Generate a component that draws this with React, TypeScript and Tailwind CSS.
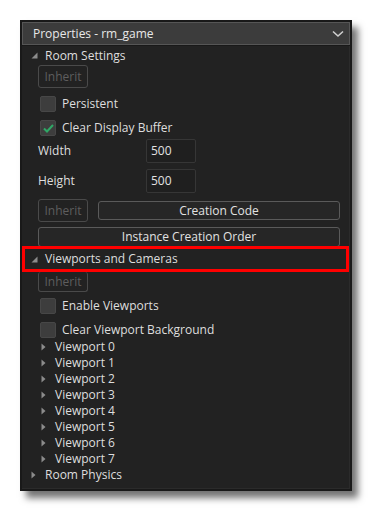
import React from "react"

const font = { fontFamily: '"Open Sans", "Noto Sans", sans-serif' }

function Expanded() {
  return (
    <svg width="7" height="7" viewBox="0 0 7 7" className="shrink-0">
      <polygon points="6.5,0.5 6.5,6.5 0.5,6.5" fill="#8c8c8c" />
    </svg>
  )
}

function Collapsed() {
  return (
    <svg width="5" height="8" viewBox="0 0 5 8" className="shrink-0">
      <polygon points="0.5,0.5 4.5,4 0.5,7.5" fill="#8c8c8c" />
    </svg>
  )
}

function Section({ label }: { label: string }) {
  return (
    <div className="flex h-[18px] items-center pl-[9px]">
      <Expanded />
      <span className="ml-[7px] pt-px text-[12px] text-[#dedede]">{label}</span>
    </div>
  )
}

function Inherit({ className = "" }: { className?: string }) {
  return (
    <div
      className={`ml-4 flex w-[50px] items-center justify-center rounded-[3px] border border-[#4a4a4a] text-[12px] text-[#5e5e5e] ${className}`}
    >
      Inherit
    </div>
  )
}

function Check({ label, checked = false, className = "" }: { label: string; checked?: boolean; className?: string }) {
  return (
    <div className={`flex h-4 items-center pl-[18px] ${className}`}>
      <div className="flex h-[16px] w-[16px] items-center justify-center rounded-[2px] border border-[#474747] bg-[#3d3d3d]">
        {checked && (
          <svg width="11" height="9" viewBox="0 0 11 9">
            <path d="M1 4.5 L4 7.5 L10 1" fill="none" stroke="#2fa866" strokeWidth="2" />
          </svg>
        )}
      </div>
      <span className="ml-[6px] text-[12px] text-[#dedede]">{label}</span>
    </div>
  )
}

function Field({ label, value, className = "" }: { label: string; value: string; className?: string }) {
  return (
    <div className={`flex h-6 items-center pl-4 ${className}`}>
      <span className="w-[108px] text-[12px] text-[#dedede]">{label}</span>
      <div className="flex h-6 w-[50px] items-center rounded-[2px] border border-[#363636] bg-[#1f1f1f] pl-[4px] text-[12px] text-[#e2e2e2]">
        {value}
      </div>
    </div>
  )
}

function Viewport({ n }: { n: number }) {
  return (
    <div className="flex h-4 items-center pl-[19px]">
      <Collapsed />
      <span className="ml-[9px] text-[12px] text-[#dedede]">Viewport {n}</span>
    </div>
  )
}

export default function App() {
  const viewports = [0, 1, 2, 3, 4, 5, 6, 7]
  return (
    <div className="h-[511px] w-[372px] bg-white pl-5 pt-5" style={font}>
      <div className="flex h-[471px] w-[332px] flex-col bg-[#191919] p-[2px] shadow-[6px_7px_7px_rgba(0,0,0,0.55)]">
        <div className="flex h-[23px] shrink-0 items-center justify-between border border-[#565656] bg-[#3c3c3c] pl-[10px] pr-[5px]">
          <span className="text-[12px] text-[#e8e8e8]">Properties - rm_game</span>
          <svg width="12" height="8" viewBox="0 0 12 8">
            <path d="M1 1.5 L6 6 L11 1.5" fill="none" stroke="#cfcfcf" strokeWidth="1.6" />
          </svg>
        </div>
        <div className="mt-px flex flex-1 flex-col border-r border-b border-[#2b2b2b] bg-[#222222]">
          <Section label="Room Settings" />
          <Inherit className="mt-px h-[23px]" />
          <Check label="Persistent" className="mt-2" />
          <Check label="Clear Display Buffer" checked className="mt-2" />
          <Field label="Width" value="500" className="mt-[3px]" />
          <Field label="Height" value="500" className="mt-[6px]" />
          <div className="mt-[6px] flex h-[23px] items-center">
            <Inherit className="h-[23px]" />
            <div className="ml-[10px] flex h-[19px] w-[242px] items-center justify-center rounded-[3px] border border-[#5a5a5a] bg-[#262626] text-[12px] text-[#e2e2e2]">
              Creation Code
            </div>
          </div>
          <div className="ml-4 mt-[5px] flex h-[20px] w-[302px] items-center justify-center rounded-[3px] border border-[#5a5a5a] bg-[#262626] text-[12px] text-[#e2e2e2]">
            Instance Creation Order
          </div>
          <div className="-mt-px flex h-[26px] w-[327px] items-center border-[3px] border-[#ff0000] pl-[6px]">
            <Expanded />
            <span className="ml-[7px] text-[12px] text-[#dedede]">Viewports and Cameras</span>
          </div>
          <Inherit className="h-[20px] border-t-0" />
          <Check label="Enable Viewports" className="mt-[6px]" />
          <Check label="Clear Viewport Background" className="mt-2" />
          <div className="mt-px flex flex-col">
            {viewports.map((n) => (
              <Viewport key={n} n={n} />
            ))}
          </div>
          <div className="flex h-4 items-center pl-[9px]">
            <Collapsed />
            <span className="ml-[9px] text-[12px] text-[#dedede]">Room Physics</span>
          </div>
        </div>
      </div>
    </div>
  )
}
